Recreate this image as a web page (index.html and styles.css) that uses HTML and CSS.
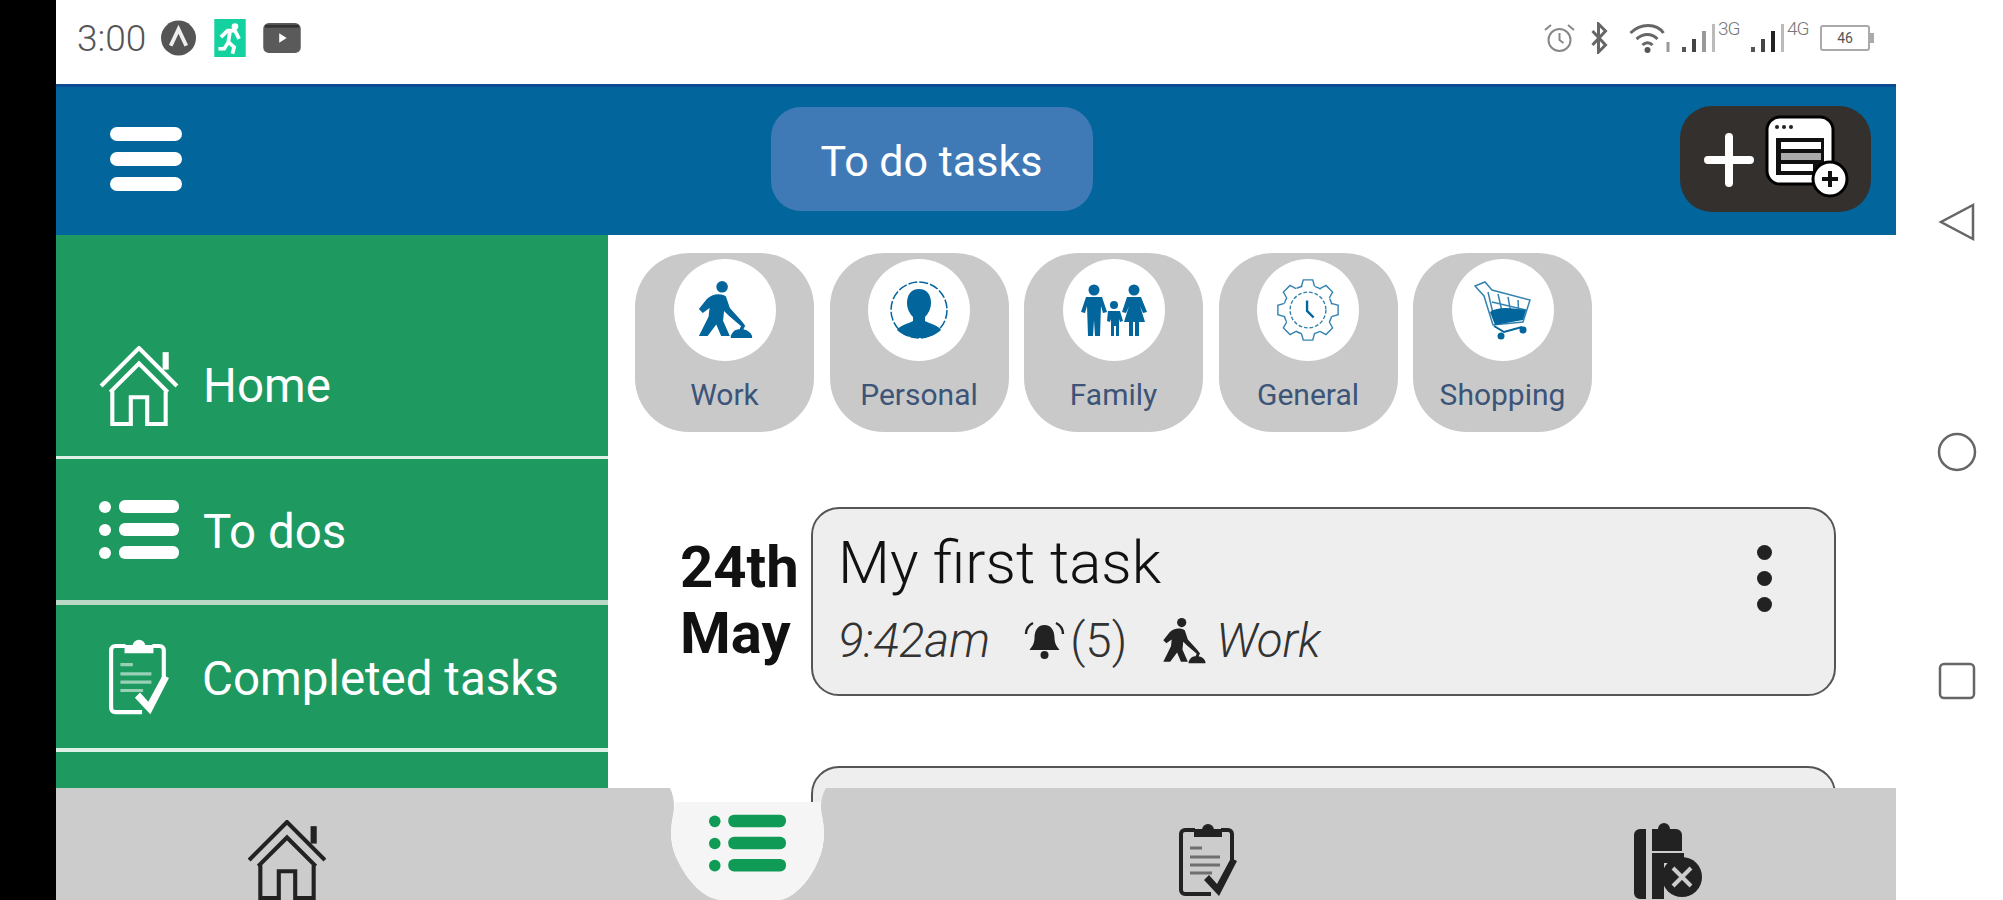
FILE: index.html
```html
<!DOCTYPE html>
<html lang="en">
<head>
  <meta charset="UTF-8" />
  <title>To do tasks</title>
  <link rel="stylesheet" href="styles.css">
</head>
<body>
  <svg class="sprite" width="0" height="0">
    <symbol id="i-home" viewBox="2 2 76 78">
      <g fill="none" stroke="currentColor" stroke-width="4">
        <path d="M3 41 40 4l37 37" />
        <path d="M12 47 40 19l28 28" />
        <path d="M14 46v32h18V52h16v26h18V46" />
        <path d="M66 8v17" stroke-width="6" />
      </g>
    </symbol>
    <symbol id="i-list" viewBox="0 0 80 60">
      <g fill="currentColor">
        <circle cx="6" cy="7" r="6" /><circle cx="6" cy="30" r="6" /><circle cx="6" cy="53" r="6" />
        <rect x="20" y="0" width="60" height="13" rx="6" />
        <rect x="20" y="23" width="60" height="13" rx="6" />
        <rect x="20" y="46" width="60" height="13" rx="6" />
      </g>
    </symbol>
    <symbol id="i-done" viewBox="0 3 60 74">
      <g fill="none" stroke="currentColor" stroke-width="4">
        <path d="M17 10H7a4 4 0 0 0-4 4v56a4 4 0 0 0 4 4h26M43 10h7a4 4 0 0 1 4 4v28" />
        <path d="M17 14v-4h8a5 5 0 0 1 10 0h8v6H17z" fill="currentColor" stroke-width="2" />
        <path d="M12 28h12M12 37h30M12 45h30M12 53h22" stroke-width="3" opacity=".55" />
      </g>
      <path d="m26 60 5-5 8 9 14-26 6 3-18 35z" fill="currentColor" />
    </symbol>
    <symbol id="i-void" viewBox="0 0 72 78">
      <path d="M22 8h6a6 6 0 0 1 12 0h6a6 6 0 0 1 6 6v16H22zM4 14a6 6 0 0 1 6-6h6v70h-6a6 6 0 0 1-6-6z" fill="currentColor" />
      <path d="M22 32h32v10H34v8h8v10h-8v18H22z" fill="currentColor" />
      <circle cx="52" cy="56" r="20" fill="currentColor" />
      <path d="m43 47 18 18m0-18L43 65" stroke="#ccc" stroke-width="4" />
    </symbol>
    <symbol id="i-work" viewBox="0 0 60 60">
      <g fill="currentColor">
        <circle cx="27" cy="6" r="6" />
        <path d="M11 19c5-6 15-7 20-3l4 12 11 12 4 5-3 2-13-11-5-5-1 10 7 16h-9l-5-12-9 12H3l10-20 1-9-7 5-4-4z" />
        <path d="M36 57c2-5 5-7 9-7l3-6 3 2-2 4c5 1 8 4 9 7v2H36z" />
      </g>
    </symbol>
  </svg>

  <div class="screen">
    <div class="bezel"></div>

    <div class="app">
      <div class="status">
        <span class="clock">3:00</span>
        <svg class="st-a" viewBox="0 0 36 36"><circle cx="18" cy="18" r="18" fill="#555" /><path d="m10 26 8-17 8 17" fill="none" stroke="#eee" stroke-width="4" /></svg>
        <svg class="st-run" viewBox="0 0 38 46"><rect width="38" height="46" fill="#14d2a0" /><circle cx="25" cy="9" r="4" fill="#fff" /><path d="M8 22l8-8h9l5 10M19 15l-2 13 7 6-2 8M17 28l-5 8H5" fill="none" stroke="#fff" stroke-width="4.500" /></svg>
        <svg class="st-yt" viewBox="0 0 40 32"><rect width="40" height="32" rx="6" fill="#5a5a5a" /><rect x="2" y="2" width="36" height="3" fill="#333" /><path d="m17 11 8 5-8 5z" fill="#fff" /></svg>

        <div class="status-right">
          <svg width="33" height="32" viewBox="0 0 33 32"><g fill="none" stroke="#888" stroke-width="2"><circle cx="16.500" cy="18" r="11" /><path d="M16.500 11v7l4 3M2 8l6-5M31 8l-6-5" /></g></svg>
          <svg class="st-bt" width="22" height="32" viewBox="0 0 19 32"><path d="M3 9l13 14-7 7V2l7 7L3 23" fill="none" stroke="#666" stroke-width="3" /></svg>
          <svg width="41" height="32" viewBox="0 0 40 32"><g fill="none" stroke="#666" stroke-width="3"><path d="M1 11c10-10 26-10 33 0M7 17c7-6 15-6 21 0M13 23c3-3 7-3 10 0" /></g><circle cx="18" cy="28" r="3" fill="#555" /><rect x="37" y="20" width="3" height="10" fill="#999" /></svg>
          <div class="signal">
            <svg width="34" height="32" viewBox="0 0 34 32"><rect x="0" y="25" width="4" height="5" fill="#555" /><rect x="10" y="17" width="4" height="13" fill="#444" /><rect x="20" y="9" width="4" height="21" fill="#999" /><rect x="30" y="2" width="3" height="28" fill="#bbb" /></svg>
            <span>3G</span>
          </div>
          <div class="signal">
            <svg width="34" height="32" viewBox="0 0 34 32"><rect x="0" y="25" width="4" height="5" fill="#555" /><rect x="10" y="17" width="4" height="13" fill="#444" /><rect x="20" y="9" width="4" height="21" fill="#222" /><rect x="30" y="2" width="3" height="28" fill="#bbb" /></svg>
            <span>4G</span>
          </div>
          <div class="battery">46</div>
        </div>
      </div>

      <header class="topbar">
        <div class="burger"><span></span><span></span><span></span></div>
        <div class="page-title">To do tasks</div>
        <button class="add-btn">
          <svg width="191" height="106" viewBox="0 0 191 106">
            <path d="M49 31v46M28 54h42" stroke="#fff" stroke-width="8" stroke-linecap="round" />
            <rect x="87" y="11" width="66" height="67" rx="13" fill="#fff" stroke="#000" stroke-width="3" />
            <circle cx="97" cy="21" r="2" fill="#222" /><circle cx="104" cy="21" r="2" fill="#222" /><circle cx="111" cy="21" r="2" fill="#222" />
            <rect x="96" y="32" width="48" height="37" fill="#111" />
            <rect x="101" y="36" width="40" height="7" fill="#fff" />
            <rect x="101" y="47" width="40" height="7" fill="#aaa" />
            <rect x="101" y="58" width="32" height="7" fill="#fff" />
            <circle cx="150" cy="73" r="17" fill="#fff" stroke="#000" stroke-width="3" />
            <path d="M150 65v16M142 73h16" stroke="#111" stroke-width="4" />
          </svg>
        </button>
      </header>

      <div class="main">
        <nav class="sidebar">
          <a class="side-item side-first">
            <svg class="side-icon"><use href="#i-home" /></svg>
            <span>Home</span>
          </a>
          <a class="side-item side-todos">
            <svg class="side-icon side-list"><use href="#i-list" /></svg>
            <span>To dos</span>
          </a>
          <a class="side-item side-done">
            <svg class="side-icon side-clip"><use href="#i-done" /></svg>
            <span>Completed tasks</span>
          </a>
          <a class="side-item side-last">
            <svg class="side-icon side-clip"><use href="#i-void" /></svg>
          </a>
        </nav>

        <div class="content">
          <div class="chips">
            <div class="chip">
              <div class="chip-icon"><svg width="58" height="58"><use href="#i-work" /></svg></div>
              <span>Work</span>
            </div>
            <div class="chip">
              <div class="chip-icon">
                <svg width="60" height="60" viewBox="0 0 60 60">
                  <circle cx="30" cy="30" r="28" fill="none" stroke="currentColor" stroke-width="1.500" stroke-dasharray="9 2" />
                  <path d="M30 9c8 0 12 6 12 14 0 6-3 11-6 14v4c5 3 13 4 16 9-5 5-13 8-22 8S13 55 8 50c3-5 11-6 16-9v-4c-3-3-6-8-6-14 0-8 4-14 12-14z" fill="currentColor" />
                </svg>
              </div>
              <span>Personal</span>
            </div>
            <div class="chip">
              <div class="chip-icon">
                <svg width="66" height="52" viewBox="0 0 66 52" fill="currentColor">
                  <circle cx="13" cy="6" r="5.500" /><path d="M5 13h16l5 15-4 1-2-7-1 30h-5l-1-16-1 16H7L6 22l-2 7-4-1z" />
                  <circle cx="33" cy="21" r="4" /><path d="M27 27h12l3 10-3 1-1-3v17h-3V42h-2v10h-3V35l-1 3-3-1z" />
                  <circle cx="53" cy="6" r="5.500" /><path d="M46 13h14l6 15-4 1-3-7 5 16h-6v14h-4V38h-2v14h-4V38h-5l5-16-3 7-4-1z" />
                </svg>
              </div>
              <span>Family</span>
            </div>
            <div class="chip">
              <div class="chip-icon">
                <svg width="64" height="64" viewBox="0 0 68 68" fill="none" stroke="currentColor" stroke-width="1.500">
                  <g opacity=".8">
                    <circle cx="34" cy="34" r="26" stroke-dasharray="6.400 14" stroke-dashoffset="13.400" />
                    <path d="M27 9l2-7h10l2 7" />
                    <path d="M27 9l2-7h10l2 7" transform="rotate(45 34 34)" />
                    <path d="M27 9l2-7h10l2 7" transform="rotate(90 34 34)" />
                    <path d="M27 9l2-7h10l2 7" transform="rotate(135 34 34)" />
                    <path d="M27 9l2-7h10l2 7" transform="rotate(180 34 34)" />
                    <path d="M27 9l2-7h10l2 7" transform="rotate(225 34 34)" />
                    <path d="M27 9l2-7h10l2 7" transform="rotate(270 34 34)" />
                    <path d="M27 9l2-7h10l2 7" transform="rotate(315 34 34)" />
                    <circle cx="34" cy="34" r="19" stroke-dasharray="4 2" />
                  </g>
                  <path d="M33 24v11l7 7" stroke-width="2.500" />
                </svg>
              </div>
              <span>General</span>
            </div>
            <div class="chip">
              <div class="chip-icon">
                <svg width="58" height="60" viewBox="0 0 58 60">
                  <g fill="none" stroke="currentColor" stroke-width="1.500" opacity=".8">
                    <path d="M1 6l10-4 7 8 38 10-7 22-30 3-9-29z" />
                    <path d="M14 12l7 30M24 14l6 26M34 17l4 22M44 20l1 18M18 22l34 8" />
                  </g>
                  <path d="M16 32c8-6 22-4 36-2l-3 10-28 5z" fill="currentColor" />
                  <path d="M20 46l10 6 18-5" fill="none" stroke="currentColor" stroke-width="2" />
                  <circle cx="27" cy="56" r="3.500" fill="currentColor" /><circle cx="49" cy="50" r="3.500" fill="currentColor" />
                </svg>
              </div>
              <span>Shopping</span>
            </div>
          </div>

          <div class="task-row">
            <div class="task-date">24th<br>May</div>
            <div class="task-card">
              <div class="task-body">
                <div class="task-title">My first task</div>
                <div class="task-meta">
                  <em>9:42am</em>
                  <span class="task-alarm">
                    <svg width="41" height="42" viewBox="0 0 41 42"><path d="M20.500 5c7 0 10 6 10 13 0 6 3 9 5 12H5.500c2-3 5-6 5-12 0-7 3-13 10-13z" fill="#222" /><circle cx="20.500" cy="35" r="4" fill="#222" /><path d="M2 14c0-5 3-9 7-11M39 14c0-5-3-9-7-11" fill="none" stroke="#222" stroke-width="2.500" /></svg>
                    (5)
                  </span>
                  <svg class="task-cat" width="46" height="46"><use href="#i-work" /></svg>
                  <em>Work</em>
                </div>
              </div>
              <div class="task-dots"><i></i><i></i><i></i></div>
            </div>
          </div>

          <div class="task-row">
            <div class="task-date"></div>
            <div class="task-card"></div>
          </div>
        </div>
      </div>

      <div class="tabbar">
        <div class="tab-left">
          <svg class="tab-home"><use href="#i-home" /></svg>
        </div>
        <svg class="tab-bump" width="156" height="139" viewBox="0 0 156 139">
          <path fill="#ccc" fill-rule="evenodd" d="M0 27H156V139H0ZM0 27C4 35 5 45 3 55C0 70 0 85 8 100C20 125 38 139 52 139H108C122 139 140 120 148 100C155 85 155 70 152 55C150 45 151 35 156 27Z" />
          <path fill="#f5f5f5" d="M4.500 41C5 45 4 50 3 55C0 70 0 85 8 100C20 125 38 139 52 139H108C122 139 140 120 148 100C155 85 155 70 152 55C151 50 150.500 45 151 41Z" />
          <svg class="tab-list" x="39" y="53" width="77" height="59"><use href="#i-list" /></svg>
        </svg>
        <div class="tab-right">
          <svg class="tab-done"><use href="#i-done" /></svg>
          <svg class="tab-void"><use href="#i-void" /></svg>
        </div>
      </div>
    </div>

    <div class="softkeys">
      <svg width="38" height="40" viewBox="0 0 38 40"><path d="M35 3v34L3 20z" fill="none" stroke="#666" stroke-width="2.500" /></svg>
      <svg width="40" height="40" viewBox="0 0 40 40"><circle cx="20" cy="20" r="18" fill="none" stroke="#666" stroke-width="2.500" /></svg>
      <svg width="38" height="38" viewBox="0 0 38 38"><rect x="2" y="2" width="34" height="34" rx="4" fill="none" stroke="#666" stroke-width="2.500" /></svg>
    </div>
  </div>
</body>
</html>
```

FILE: styles.css
```css
* {
  box-sizing: border-box;
}
html, body {
  margin: 0;
  height: 900px;
  overflow: hidden;
  background: #fff;
  font-family: 'Roboto', 'Liberation Sans', sans-serif;
}
.sprite {
  display: block;
  height: 0;
}
.screen {
  display: flex;
  height: 900px;
}
.bezel {
  width: 56px;
  background: #000;
}
.app {
  width: 1840px;
  display: flex;
  flex-direction: column;
}

/* status bar */
.status {
  height: 84px;
  display: flex;
  align-items: center;
  padding: 0 23px 8px 21px;
}
.clock {
  font-size: 37px;
  font-weight: 300;
  color: #555;
  margin-right: 15px;
}
.st-a {
  width: 35px;
  height: 36px;
  margin-right: 15px;
}
.st-run {
  width: 38px;
  height: 38px;
  margin-right: 13px;
}
.st-yt {
  width: 40px;
  height: 30px;
}
.status-right {
  margin-left: auto;
  display: flex;
  align-items: center;
  gap: 12px;
}
.st-bt {
  margin-right: 7px;
}
.signal {
  display: flex;
  align-items: flex-start;
  gap: 2px;
  margin-right: -4px;
}
.signal span {
  font-size: 19px;
  font-weight: 300;
  letter-spacing: -1px;
  color: #777;
  width: 25px;
  margin-top: -5px;
}
.battery {
  position: relative;
  width: 50px;
  height: 26px;
  border: 2px solid #aaa;
  border-radius: 3px;
  font-size: 14px;
  line-height: 22px;
  text-align: center;
  color: #555;
  margin-right: 3px;
}
.battery::after {
  content: "";
  position: absolute;
  right: -6px;
  top: 6px;
  width: 4px;
  height: 10px;
  background: #aaa;
}

/* header */
.topbar {
  height: 151px;
  background: #02659c;
  border-top: 3px solid #0a4c93;
  display: flex;
  align-items: center;
  justify-content: space-between;
  padding: 0 25px 4px 54px;
}
.burger {
  width: 72px;
  display: flex;
  flex-direction: column;
  gap: 11px;
}
.burger span {
  height: 14px;
  background: #fff;
  border-radius: 7px;
}
.page-title {
  width: 322px;
  height: 104px;
  margin-left: 1px;
  padding-top: 4px;
  background: #3f7ab6;
  border-radius: 30px;
  color: #fff;
  font-size: 43px;
  display: flex;
  align-items: center;
  justify-content: center;
}
.add-btn {
  width: 191px;
  height: 106px;
  padding: 0;
  border: none;
  border-radius: 32px;
  background: #33302e;
}
.add-btn svg {
  display: block;
}

/* sidebar and content */
.main {
  height: 580px;
  display: flex;
  overflow: hidden;
}
.sidebar {
  width: 552px;
  flex: none;
  background: #1e9960;
  color: #fff;
}
.side-item {
  display: flex;
  align-items: center;
  gap: 24px;
  padding-left: 43px;
  font-size: 47.500px;
  height: 146px;
  border-bottom: 3px solid #dff0e6;
}
.side-first {
  height: 224px;
  padding-top: 80px;
}
.side-todos {
  height: 146px;
  border-bottom: 5px solid #b9d8c6;
}
.side-todos span,
.side-done span {
  padding-top: 5px;
}
.side-done {
  height: 147px;
  border-bottom: 4px solid #dff0e6;
}
.side-last {
  border-bottom: none;
  align-items: flex-start;
  padding-top: 30px;
}
.side-icon {
  width: 80px;
  height: 80px;
  flex: none;
}
.side-list {
  height: 62px;
}
.side-clip {
  width: 62px;
  height: 78px;
  margin: 0 8px 0 9px;
}
.content {
  flex: 1;
  padding: 18px 60px 0 27px;
}
.chips {
  display: flex;
  gap: 15.500px;
}
.chip {
  width: 179px;
  height: 179px;
  background: #c9c9c9;
  border-radius: 54px;
  padding-top: 6px;
  display: flex;
  flex-direction: column;
  align-items: center;
  color: #3c5478;
  font-size: 30px;
}
.chip-icon {
  width: 102px;
  height: 102px;
  margin-bottom: 16px;
  background: #fff;
  border-radius: 50%;
  color: #02659c;
  display: flex;
  align-items: center;
  justify-content: center;
}
.task-row {
  display: flex;
  margin-top: 70px;
}
.chips + .task-row {
  margin-top: 75px;
}
.task-date {
  width: 176px;
  padding: 27px 0 0 45px;
  font-size: 58px;
  font-weight: 700;
  line-height: 66px;
  color: #111;
  flex: none;
}
.task-card {
  flex: 1;
  height: 189px;
  background: #eee;
  border: 2px solid #555;
  border-radius: 28px;
  display: flex;
  justify-content: space-between;
  padding: 18px 62px 0 25px;
}
.task-title {
  font-size: 60px;
  font-weight: 300;
  line-height: 72px;
  color: #111;
}
.task-meta {
  display: flex;
  align-items: center;
  margin-top: 14px;
  font-size: 47.500px;
  font-weight: 300;
  color: #333;
}
.task-alarm {
  display: flex;
  align-items: center;
  gap: 5px;
  margin: 0 34px 0 34px;
}
.task-cat {
  color: #222;
  margin-right: 9px;
}
.task-dots {
  display: flex;
  flex-direction: column;
  gap: 11px;
  padding-top: 18px;
}
.task-dots i {
  width: 15px;
  height: 15px;
  border-radius: 50%;
  background: #222;
}

/* bottom tabs */
.tabbar {
  position: relative;
  height: 112px;
  margin-top: -27px;
  display: flex;
}
.tabbar svg {
  display: block;
}
.tab-left {
  width: 614px;
  background: #ccc;
  padding: 32px 0 0 192px;
  color: #222;
}
.tab-home {
  width: 78px;
  height: 80px;
}
.tab-bump {
  flex: none;
  margin-top: -27px;
}
.tab-list {
  color: #0f9a55;
}
.tab-right {
  flex: 1;
  background: #ccc;
  padding: 33px 0 0 352px;
  display: flex;
  gap: 392px;
  color: #222;
}
.tab-done {
  width: 60px;
  height: 78px;
}
.tab-void {
  width: 72px;
  height: 78px;
}

/* phone soft keys */
.softkeys {
  flex: 1;
  display: flex;
  flex-direction: column;
  align-items: center;
  gap: 190px;
  padding: 202px 0 0 15px;
}
```
